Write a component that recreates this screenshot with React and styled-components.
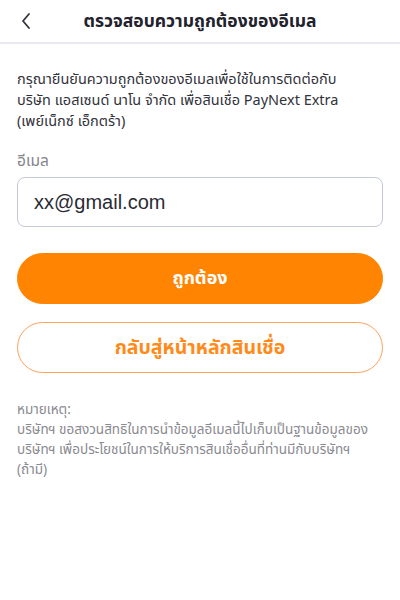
import React from 'react';
import styled, { createGlobalStyle } from 'styled-components';

const GlobalStyle = createGlobalStyle`
    html, body {
        margin: 0;
        padding: 0;
        background: #ffffff;
    }
    body {
        font-family: "Noto Sans", "Noto Sans Thai", "DejaVu Sans", sans-serif;
        color: #2b2b33;
    }
`

const Page = styled.div`
    width: 400px;
    min-height: 600px;
    background: #ffffff;
`

const Header = styled.header`
    height: 42px;
    border-bottom: 2px solid #e9e9f2;
    display: grid;
    grid-template-columns: 56px 1fr 56px;
    align-items: center;
`

const BackButton = styled.button`
    border: none;
    background: none;
    padding: 0 0 0 20px;
    height: 100%;
    display: flex;
    align-items: center;
    cursor: pointer;
`

const Title = styled.h1`
    margin: 0;
    font-size: 17.5px;
    font-weight: 700;
    text-align: center;
    color: #22222c;
    white-space: nowrap;
`

const Content = styled.main`
    padding: 24px 17px 0;
    display: flex;
    flex-direction: column;
`

const Intro = styled.p`
    margin: 0;
    font-size: 14.5px;
    line-height: 21px;
    color: #33333b;
`

const Label = styled.label`
    margin-top: 19px;
    font-size: 15.5px;
    line-height: 20px;
    color: #85858c;
`

const Input = styled.input`
    margin-top: 7px;
    height: 50px;
    box-sizing: border-box;
    border: 1px solid #c6c9d8;
    border-radius: 8px;
    padding: 0 16px;
    font-family: "Liberation Sans", "Noto Sans", sans-serif;
    font-size: 20px;
    color: #2b2b33;
    outline: none;
`

const Button = styled.button`
    height: 51px;
    border-radius: 26px;
    box-sizing: border-box;
    font-family: inherit;
    font-weight: 700;
    cursor: pointer;
    font-size: ${ props => props.$size };
    margin-top: ${ props => props.$gap };
    border: 1.5px solid ${ props => props.$primary ? '#ff8402' : '#ffa25a' };
    background: ${ props => props.$primary ? '#ff8402' : '#ffffff' };
    color: ${ props => props.$primary ? '#ffffff' : '#ff8a1a' };
`

const Note = styled.div`
    margin-top: 26px;
    font-size: 13.5px;
    line-height: 20px;
    color: #8a8a90;
`

const Chevron = () => (
    <svg width="12" height="18" viewBox="0 0 12 18" fill="none">
        <path d="M9 2 L3 9 L9 16" stroke="#33333b" strokeWidth="1.8" strokeLinecap="round" strokeLinejoin="round" />
    </svg>
)

const App = () => {
    return (
        <Page>
            <GlobalStyle />
            <Header>
                <BackButton aria-label="back"><Chevron /></BackButton>
                <Title>ตรวจสอบความถูกต้องของอีเมล</Title>
                <div />
            </Header>
            <Content>
                <Intro>
                    กรุณายืนยันความถูกต้องของอีเมลเพื่อใช้ในการติดต่อกับ<br />
                    บริษัท แอสเซนด์ นาโน จำกัด เพื่อสินเชื่อ PayNext Extra<br />
                    (เพย์เน็กซ์ เอ็กตร้า)
                </Intro>
                <Label htmlFor="email">อีเมล</Label>
                <Input id="email" defaultValue="xx@gmail.com" />
                <Button $primary $gap="26px" $size="18px">ถูกต้อง</Button>
                <Button $gap="18px" $size="19.5px">กลับสู่หน้าหลักสินเชื่อ</Button>
                <Note>
                    หมายเหตุ:<br />
                    บริษัทฯ ขอสงวนสิทธิในการนำข้อมูลอีเมลนี้ไปเก็บเป็นฐานข้อมูลของ<br />
                    บริษัทฯ เพื่อประโยชน์ในการให้บริการสินเชื่ออื่นที่ท่านมีกับบริษัทฯ<br />
                    (ถ้ามี)
                </Note>
            </Content>
        </Page>
    )
}

export default App
